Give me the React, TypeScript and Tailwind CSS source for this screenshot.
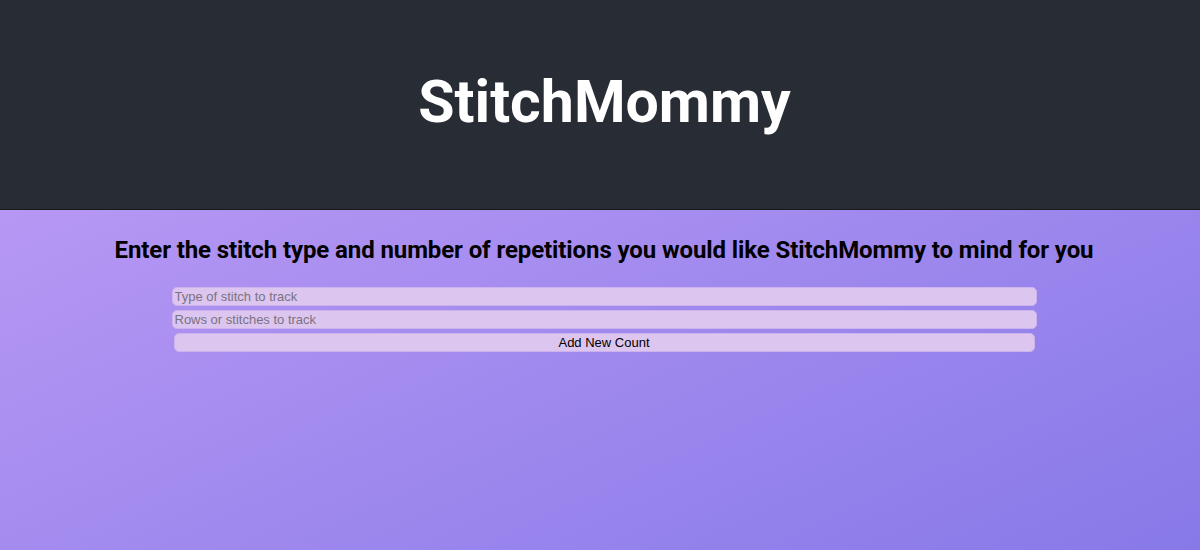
export default function App() {
  return (
    <div className="min-h-[550px] flex flex-col bg-gradient-to-br from-[#c29ef6] to-[#8779e8] font-['Roboto',sans-serif]">
      <header className="h-[210px] bg-[#282c34] border-b border-[#16181c] flex items-center justify-center">
        <h1 className="text-white text-[59px] font-bold leading-none -mt-[6px] ml-[9px]">
          StitchMommy
        </h1>
      </header>
      <main className="flex flex-col items-center">
        <h2 className="mt-[25px] text-[24px] leading-[30px] font-bold text-black tracking-[-0.1px] ml-[8px]">
          Enter the stitch type and number of repetitions you would like StitchMommy to mind for you
        </h2>
        <form className="mt-[22px] ml-[8px] flex flex-col items-center gap-[4px] font-['Liberation_Sans',Arial,sans-serif] text-[13px]">
          <input
            type="text"
            placeholder="Type of stitch to track"
            className="w-[865px] h-[19px] px-[2px] rounded-[5px] bg-[#dcc6ef] border border-[#cdb3ee] text-black placeholder:text-[#7a7282] outline-none"
          />
          <input
            type="text"
            placeholder="Rows or stitches to track"
            className="w-[865px] h-[19px] px-[2px] rounded-[5px] bg-[#dcc6ef] border border-[#cdb3ee] text-black placeholder:text-[#7a7282] outline-none"
          />
          <button
            type="button"
            className="w-[861px] h-[19px] rounded-[5px] bg-[#dcc6ef] border border-[#cdb3ee] text-black leading-none"
          >
            Add New Count
          </button>
        </form>
      </main>
    </div>
  );
}
